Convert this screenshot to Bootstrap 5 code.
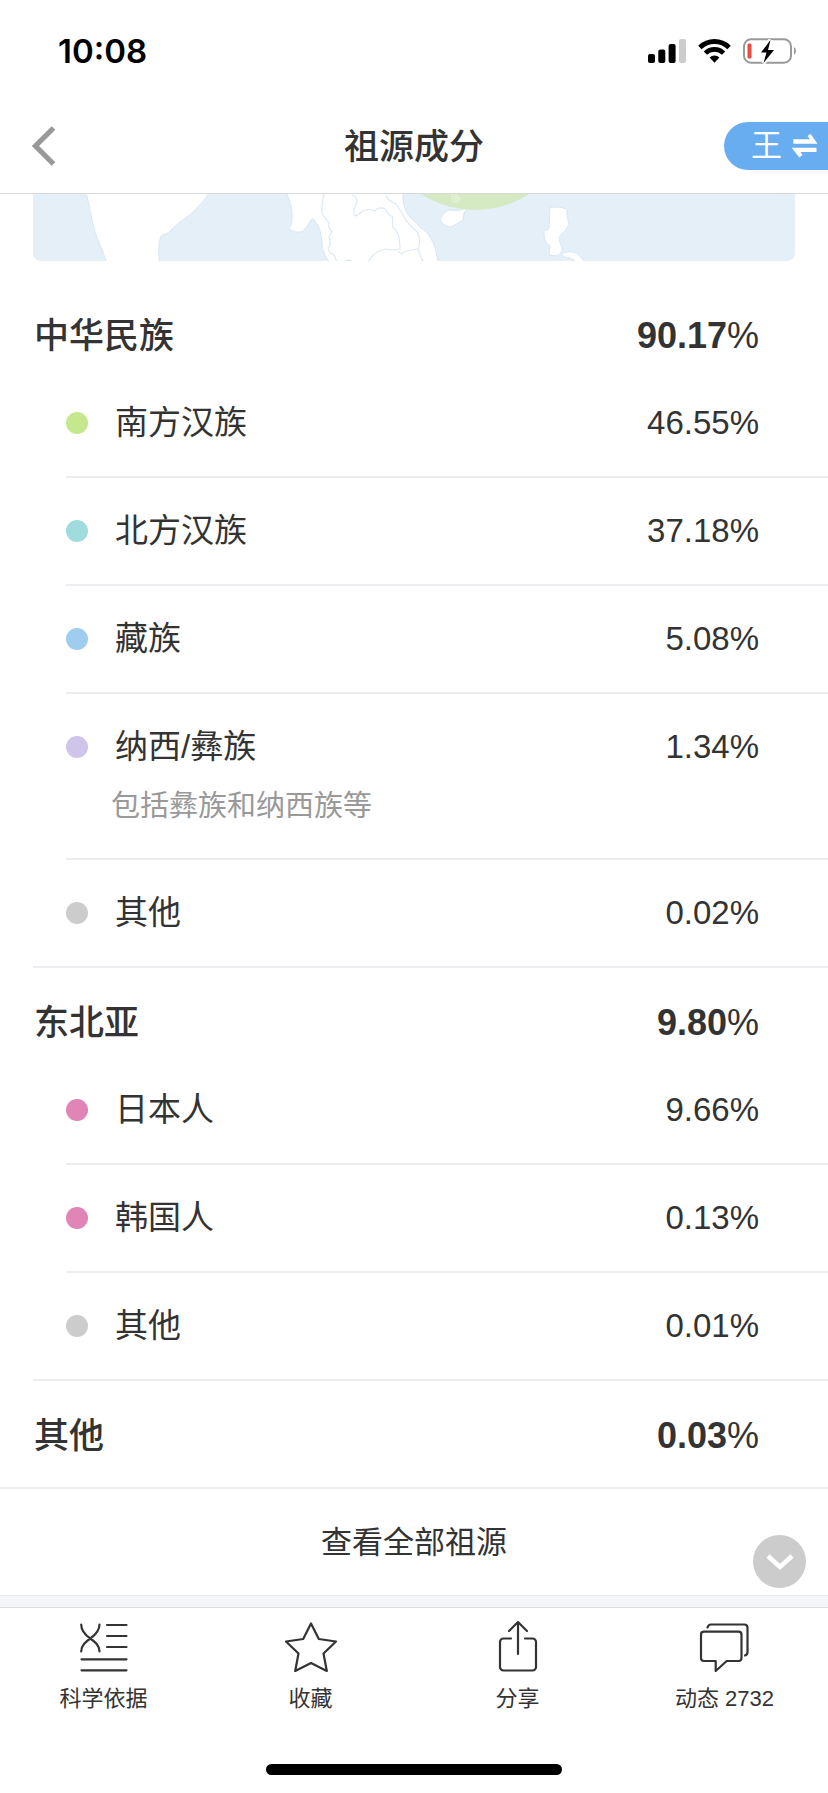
<!DOCTYPE html>
<html lang="zh-CN">
<head>
<meta charset="utf-8">
<meta name="viewport" content="width=device-width, initial-scale=1">
<title>祖源成分</title>
<link href="https://cdn.jsdelivr.net/npm/bootstrap@5.3.0/dist/css/bootstrap.min.css" rel="stylesheet">
<style>
  body { font-family: "Liberation Sans", "Noto Sans CJK SC", sans-serif; color: #333; background: #fff; }
  svg { display: block; flex: none; }
  button, a { color: inherit; text-decoration: none; }
  .status { padding: 29px 30px 26px 58px; line-height: 44px; color: #000; }
  .clock { font-family: Inter, sans-serif; font-size: 33px; font-weight: 600; }
  .topbar { height: 95px; border-bottom: 1px solid #d6d8da; }
  .side { flex: 1 1 0; }
  .back { padding: 12px 32px; }
  .topbar h1 { padding-top: 2px; font-size: 35px; font-weight: 500; line-height: 44px; }
  .switcher { height: 48px; padding: 0 10px 0 27px; gap: 9px; background: #69adf1; color: #fff; font-size: 31px; line-height: 48px; border-radius: 24px 0 0 24px; }
  .map { margin: 0 33px 20px; border-radius: 0 0 8px 8px; overflow: hidden; }
  .map svg { width: 100%; height: auto; }
  .group { margin-left: 33px; border-bottom: 2px solid #ebedf0; }
  .group-head { padding: 32px 69px 11px 1px; }
  .group-head h2 { font-size: 35px; line-height: 46px; font-weight: 500; margin: 0; }
  .group-head strong { font-size: 36px; line-height: 46px; font-weight: 700; }
  .group-last { margin-left: 0; padding-left: 33px; }
  .group-last .group-head { padding-bottom: 28px; }
  .item { margin-left: 33px; padding: 32px 69px 32px 0; font-size: 33px; line-height: 42px; border-bottom: 2px solid #ebedf0; }
  .item:last-child { border-bottom: 0; }
  .dot { width: 22px; height: 22px; margin-right: 27px; border-radius: 50%; }
  .note { margin: 18px 0 0 45px; font-size: 29px; line-height: 40px; color: #999; }
  .all { font-size: 31px; line-height: 42px; padding: 33px 32px 31px; }
  .to-bottom { right: 22px; bottom: 7px; width: 53px; height: 53px; background: #ccc; }
  .band { height: 12px; background: #f3f5f8; border-top: 1px solid #e9ebee; }
  .tabs { border-top: 1px solid #dcdcdc; padding: 12px 0 18px; background: #fff; }
  .tab { font-size: 22px; line-height: 30px; gap: 12px; }
  .home-bar { width: 296px; height: 11px; margin: 50px auto 0; border-radius: 6px; background: #000; }
  .c-south { background: #c5e88f; }
  .c-north { background: #a0dcde; }
  .c-tibet { background: #9fcdf0; }
  .c-naxi { background: #cfc5ea; }
  .c-other { background: #ccc; }
  .c-pink { background: #e085b5; }
</style>
</head>
<body class="d-flex flex-column min-vh-100">
<header>
  <div class="status d-flex justify-content-between align-items-center">
    <span class="clock">10:08</span>
    <div class="d-flex align-items-center">
      <svg width="38" height="26" viewBox="0 0 38 26" role="img" aria-label="信号">
        <rect x="0" y="16" width="7" height="9" rx="2"/><rect x="10.300" y="11.500" width="7" height="13.500" rx="2"/><rect x="20.600" y="6" width="7" height="19" rx="2"/><rect x="31" y="1" width="7" height="24" rx="2" fill="#ccc"/>
      </svg>
      <svg class="ms-2 me-2 px-1" width="41" height="26" viewBox="0 0 34 26" role="img" aria-label="无线网络">
        <path d="M2 9.300a21.500 21.500 0 0 1 30 0" fill="none" stroke="#000" stroke-width="5"/>
        <path d="M7.600 15.200a13.500 13.500 0 0 1 18.800 0" fill="none" stroke="#000" stroke-width="4.800"/>
        <path d="M12 19.600a7.200 7.200 0 0 1 10 0L17 25.200z"/>
      </svg>
      <svg width="55" height="26" viewBox="0 0 55 26" role="img" aria-label="正在充电">
        <rect x="1" y="1.300" width="47" height="23.400" rx="7" fill="none" stroke="#999" stroke-width="2"/>
        <path d="M51 9a5 5 0 0 1 0 8z" fill="#999"/>
        <rect x="4.500" y="5.500" width="4" height="15" rx="1.500" fill="#eb4b3d"/>
        <path d="M27.500 2 18 14.500h5.500L20.500 25 31 12h-6z" stroke="#fff" stroke-width="4"/>
        <path d="M27.500 2 18 14.500h5.500L20.500 25 31 12h-6z"/>
      </svg>
    </div>
  </div>
  <nav class="topbar d-flex align-items-center" aria-label="页面导航">
    <div class="side">
      <button type="button" class="back btn border-0 rounded-0" aria-label="返回">
        <svg width="24" height="40" viewBox="0 0 24 40"><path d="M21.500 2 3.500 20l18 18" fill="none" stroke="#999" stroke-width="5.200"/></svg>
      </button>
    </div>
    <h1 class="m-0">祖源成分</h1>
    <div class="side d-flex justify-content-end">
      <button type="button" class="switcher border-0 d-flex align-items-center">王
        <svg width="27" height="26" viewBox="0 0 27 26" fill="#fff"><path d="M2.300 6.300H19L16.500 3l3-2.200 7 9.900H2.300zM.7 14.700h24.800V19h-16l2 3-3.200 2.500z"/></svg>
      </button>
    </div>
  </nav>
</header>

<main>
  <div class="map">
    <svg viewBox="33 194 762 67" role="img" aria-label="祖源分布地图">
      <path d="M33 194h762v67H33z" fill="#e4eff8"/>
      <g fill="#fff" stroke="#d8e7f3" stroke-width="1">
        <path d="M86 192C89 205 91 216 94 228S103 250 107 264L160 264C158 256 158 244 161 236Q163 234 166 234Q170 232 173 228C180 221 187 218 195 210Q203 203 210 192z"/>
        <path d="M286 192Q293 207 292 218Q292 225 289 229Q297 234 303 231Q307 227 311 220Q313 217 315 221Q321 228 322 243Q322 254 331 264L438 264Q437 248 430 237Q427 231 421 228L409 216Q402 207 403 192z"/>
        <path d="M448 210Q458 212 467 208Q463 213 463 220Q457 224 451 227Q443 226 440 220Q441 214 448 210z"/>
        <path d="M550 207.500Q557 206 567 209Q566 216 569 224Q567 230 560 236Q558 240 562 248Q562 254 556 256Q552 255 549 255L550 246Q543 242 544 230Q549 231 549 227z"/>
        <path d="M561 254Q568 250 577 253L585 262H575Q573 257 566 258z"/>
      </g>
      <circle cx="475" cy="111" r="99" fill="#d5eac3"/>
      <path d="M451 194h6l4 5-3 4h-5l-2-4z" fill="#e0efcd"/>
      <g fill="none" stroke="#dce9f5" stroke-width="1.200">
        <path d="M324 194Q321 206 322 214L329 223Q328 229 332 231L329 237Q332 243 328 248Q329 253 334 255L337 262"/>
        <path d="M352 195Q358 197 357 203Q352 211 355 216Q358 215 363 211Q368 208 374 211Q380 206 385 209Q388 215 393 217Q392 223 393 228Q400 231 400 249Q391 251 385 249Q373 252 368 262"/>
        <path d="M386 195Q388 201 396 204Q402 212 407 222L418 233Q421 243 418 249Q412 249 404 252Q402 256 398 251M418 249Q420 257 424 262"/>
      </g>
      <ellipse cx="349" cy="262" rx="4" ry="2.500" fill="#dce9f5"/>
    </svg>
  </div>

  <section class="group">
    <div class="group-head d-flex justify-content-between align-items-start"><h2>中华民族</h2><strong>90.17<span class="fw-normal">%</span></strong></div>
    <ul class="list-unstyled m-0">
      <li class="item"><div class="d-flex align-items-center"><span class="dot c-south"></span><span>南方汉族</span><span class="ms-auto">46.55%</span></div></li>
      <li class="item"><div class="d-flex align-items-center"><span class="dot c-north"></span><span>北方汉族</span><span class="ms-auto">37.18%</span></div></li>
      <li class="item"><div class="d-flex align-items-center"><span class="dot c-tibet"></span><span>藏族</span><span class="ms-auto">5.08%</span></div></li>
      <li class="item"><div class="d-flex align-items-center"><span class="dot c-naxi"></span><span>纳西/彝族</span><span class="ms-auto">1.34%</span></div>
        <p class="note">包括彝族和纳西族等</p></li>
      <li class="item"><div class="d-flex align-items-center"><span class="dot c-other"></span><span>其他</span><span class="ms-auto">0.02%</span></div></li>
    </ul>
  </section>

  <section class="group">
    <div class="group-head d-flex justify-content-between align-items-start"><h2>东北亚</h2><strong>9.80<span class="fw-normal">%</span></strong></div>
    <ul class="list-unstyled m-0">
      <li class="item"><div class="d-flex align-items-center"><span class="dot c-pink"></span><span>日本人</span><span class="ms-auto">9.66%</span></div></li>
      <li class="item"><div class="d-flex align-items-center"><span class="dot c-pink"></span><span>韩国人</span><span class="ms-auto">0.13%</span></div></li>
      <li class="item"><div class="d-flex align-items-center"><span class="dot c-other"></span><span>其他</span><span class="ms-auto">0.01%</span></div></li>
    </ul>
  </section>

  <section class="group group-last">
    <div class="group-head d-flex justify-content-between align-items-start"><h2>其他</h2><strong>0.03<span class="fw-normal">%</span></strong></div>
  </section>

  <div class="position-relative">
    <a href="#all" class="all d-block text-center">查看全部祖源</a>
    <button type="button" class="to-bottom position-absolute border-0 p-0 rounded-circle d-flex align-items-center justify-content-center" aria-label="向下滚动">
      <svg width="28" height="18" viewBox="0 0 28 18"><path d="M2 3l12 11L26 3" fill="none" stroke="#fff" stroke-width="4.500"/></svg>
    </button>
  </div>
  <div class="band"></div>
</main>

<footer class="tabs mt-auto">
  <nav class="row g-0" aria-label="底部导航">
    <a href="#science" class="tab col d-flex flex-column align-items-center">
      <svg width="52" height="52" viewBox="0 0 52 52" fill="none" stroke="#333" stroke-width="2.200" stroke-linecap="round"><path d="M3.200 4.500C3.200 11 8 15.500 12.300 18.500S21.500 25 21.500 31.500M21.500 4.500C21.500 11 16.500 15.500 12.300 18.500S3.200 25 3.200 31.500M29 5H48.500M29 16H48.500M29 27H48.500M3.500 39.300h45M3.500 50.300h45"/></svg>
      <span>科学依据</span>
    </a>
    <a href="#favorite" class="tab col d-flex flex-column align-items-center">
      <svg width="52" height="52" viewBox="0 0 52 52" fill="none" stroke="#333" stroke-width="2.200" stroke-linejoin="round"><path d="M26 3.500 33.800 19l17.200 2.500-12.500 12L41.800 51 26 43 10.200 51l3.300-17.500L1 21.500 18.200 19z"/></svg>
      <span>收藏</span>
    </a>
    <a href="#share" class="tab col d-flex flex-column align-items-center">
      <svg width="52" height="52" viewBox="0 0 52 52" fill="none" stroke="#333" stroke-width="2.200" stroke-linecap="round" stroke-linejoin="round"><path d="M19 18.500h-7.500a3.500 3.500 0 0 0-3.500 3.500v25a3.500 3.500 0 0 0 3.500 3.500h29a3.500 3.500 0 0 0 3.500-3.500V22a3.500 3.500 0 0 0-3.500-3.500H33M26 34V2M17 11l9-9 9 9"/></svg>
      <span>分享</span>
    </a>
    <a href="#feed" class="tab col d-flex flex-column align-items-center">
      <svg width="52" height="52" viewBox="0 0 52 52" fill="none" stroke="#333" stroke-width="2.200" stroke-linecap="round" stroke-linejoin="round"><path d="M5 11.700H39.500a3 3 0 0 1 3 3V38a3 3 0 0 1-3 3H27.700l-11 10V41H5a3 3 0 0 1-3-3V14.700a3 3 0 0 1 3-3zM8.500 7.500c.5-2 1.500-3 3.500-3H45.500a3 3 0 0 1 3 3V32c0 2-.8 3-2.500 3.500"/></svg>
      <span>动态 2732</span>
    </a>
  </nav>
  <div class="home-bar"></div>
</footer>
<script src="https://cdn.jsdelivr.net/npm/bootstrap@5.3.0/dist/js/bootstrap.bundle.min.js"></script>
</body>
</html>
